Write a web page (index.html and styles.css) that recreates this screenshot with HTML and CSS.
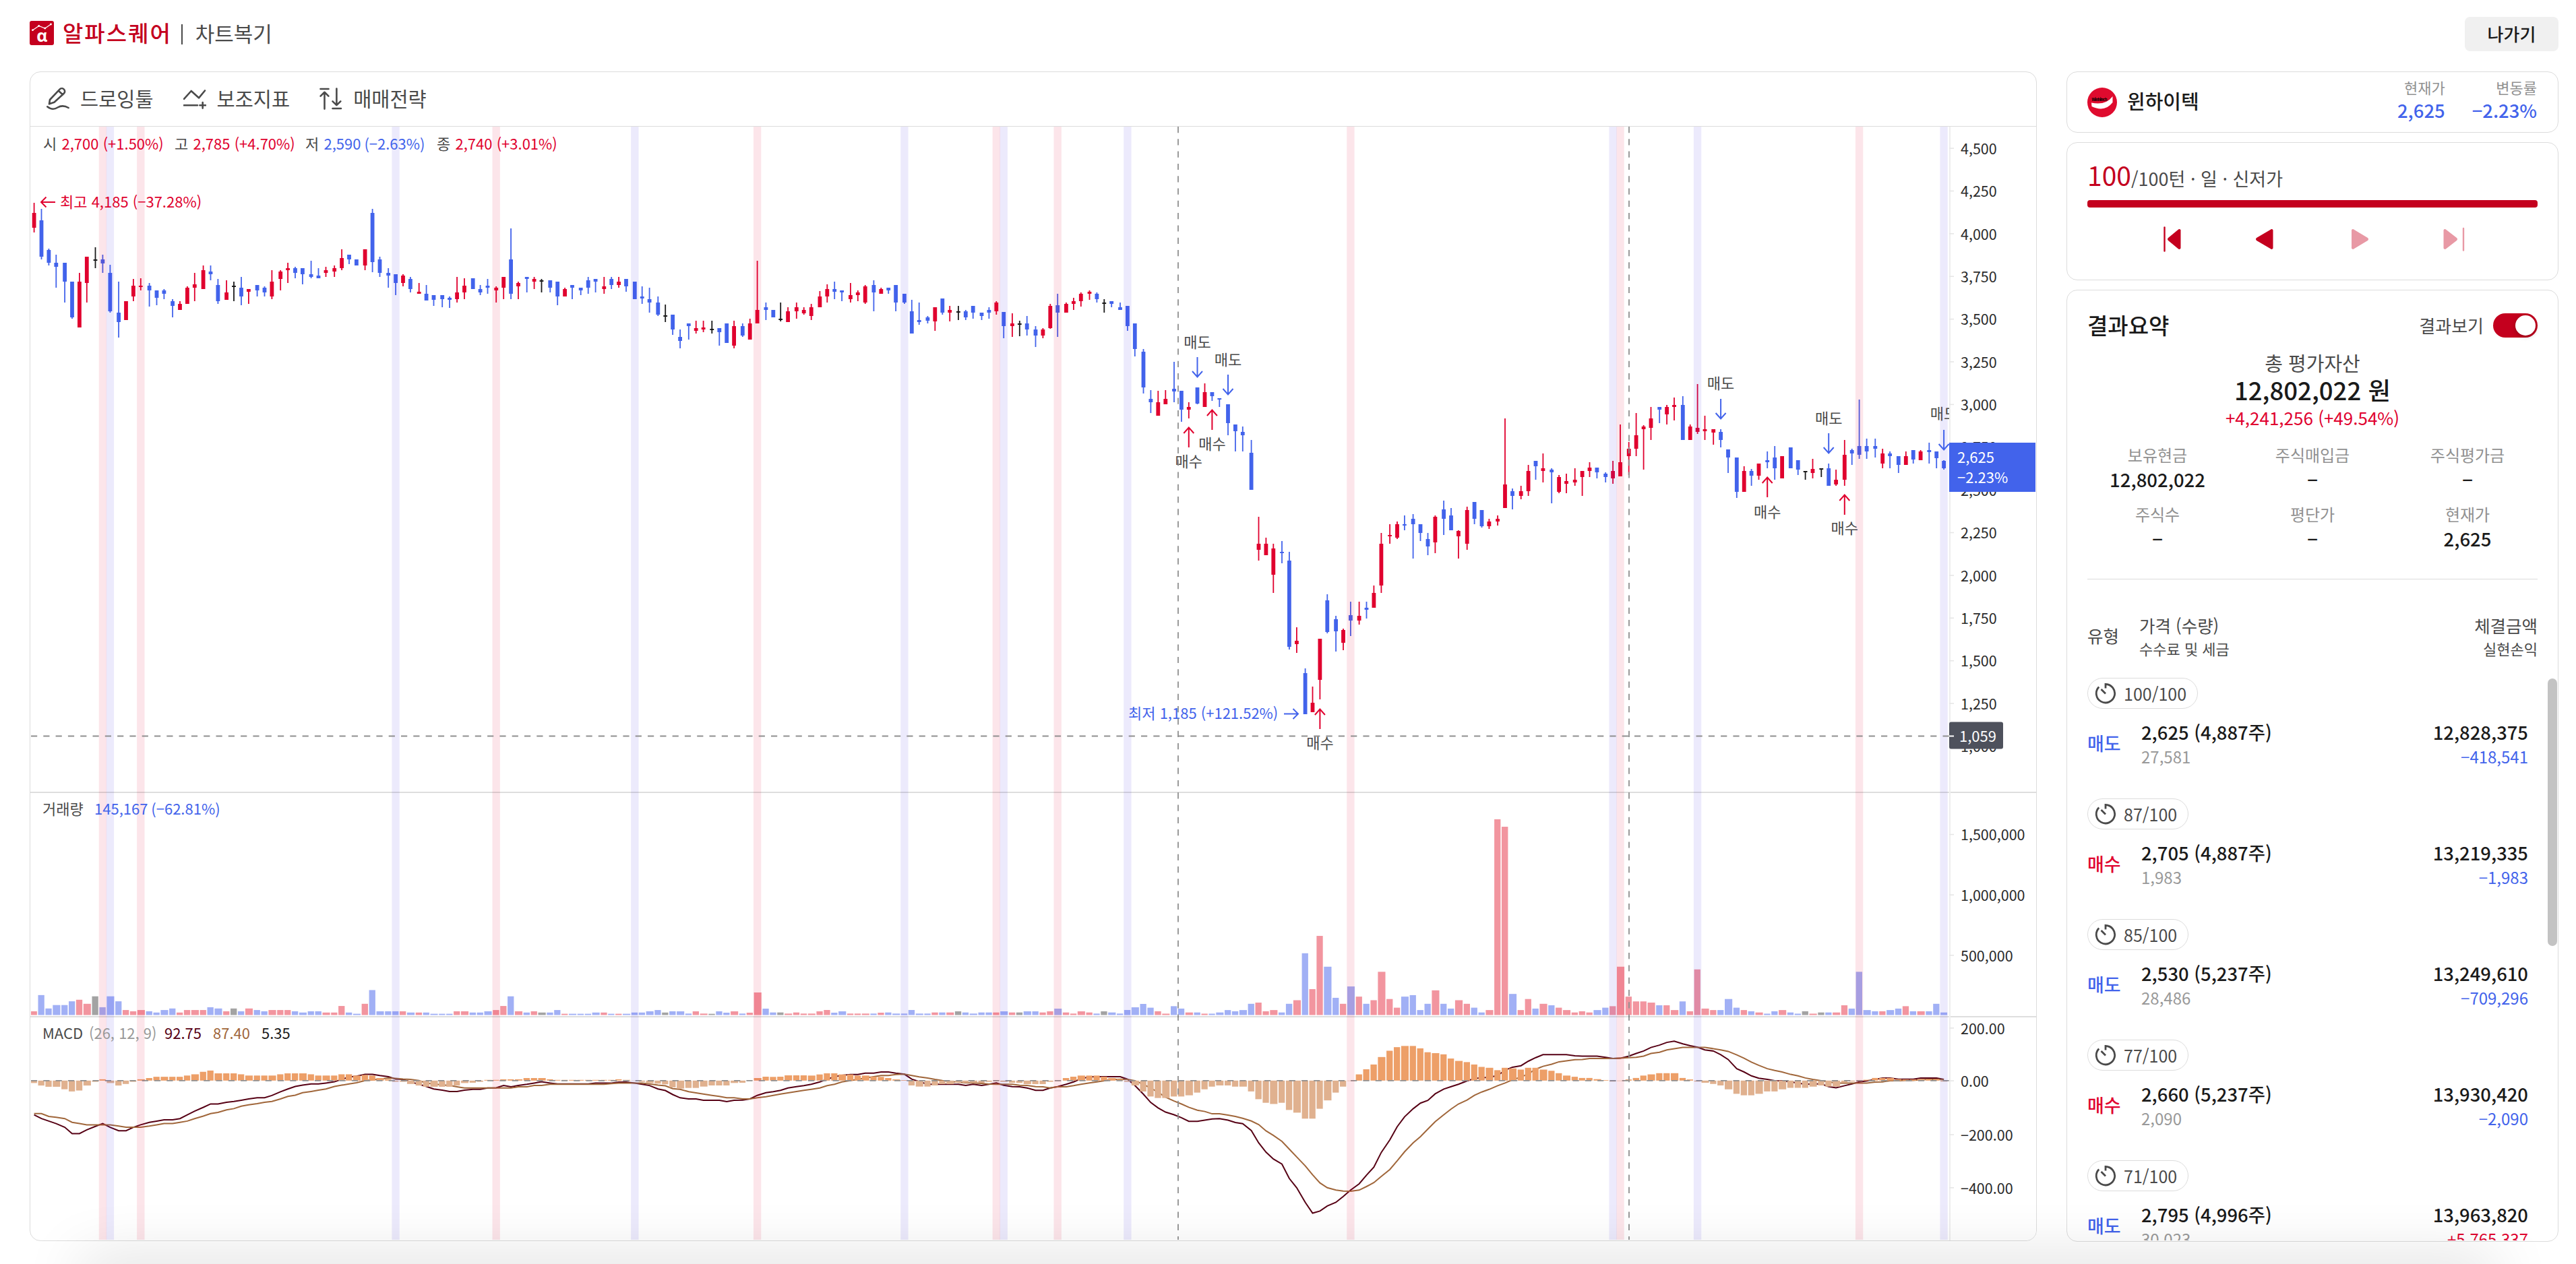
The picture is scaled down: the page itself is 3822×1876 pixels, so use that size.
FILE: index.html
```html
<!DOCTYPE html>
<html lang="ko">
<head>
  <meta charset="UTF-8">
  <meta name="viewport" content="width=device-width, initial-scale=1.0">
  <title>알파스퀘어 | 차트복기</title>
  <link rel="stylesheet" href="styles.css">
</head>
<body>

  <header class="header">
    <div class="brand">
      <svg class="brand-logo" viewBox="0 0 36 36">
        <rect width="36" height="36" rx="3" fill="#c4001e"/>
        <polyline points="4.5,13.7 13.7,7.5 22.8,11 31.5,5" fill="none" stroke="#fff" stroke-width="1.2"/>
        <circle cx="4.5" cy="13.7" r="1.4" fill="#fff"/><circle cx="13.7" cy="7.5" r="1.4" fill="#fff"/>
        <circle cx="22.8" cy="11" r="1.4" fill="#fff"/><circle cx="31.5" cy="5" r="1.4" fill="#fff"/>
        <text class="brand-alpha" x="18.4" y="30.5" text-anchor="middle">α</text>
      </svg>
      <span class="brand-name">알파스퀘어</span>
      <span class="brand-bar"></span>
      <span class="brand-page">차트복기</span>
    </div>
    <button class="exit-btn">나가기</button>
  </header>

  <main class="main">
    <section class="card chart-card">
      <div class="toolbar">
        <div class="tool">
          <svg viewBox="0 0 34 34"><path d="M4 24.3 L5 18 L19.5 2.7 a4.3 4.3 0 0 1 6.5 5.8 L11.5 21.8 Z M17.8 4.8 l6.4 5.6"/><path d="M1.2 28.3 Q9 34.5 16.5 29.5 Q24 25 32.6 30"/></svg>
          <span>드로잉툴</span>
        </div>
        <div class="tool">
          <svg viewBox="0 0 34 34"><path d="M1 16.8 L11.7 5 L23 15.3 L32 4.5 M1 26.3 H21 M24.4 26.3 H33 M28.7 22 V30.6"/></svg>
          <span>보조지표</span>
        </div>
        <div class="tool">
          <svg viewBox="0 0 34 34"><path d="M1.5 2 H13.5 M7.5 31.6 V7 M1.6 12.6 L7.5 6.8 L13.4 12.6 M25.4 1.5 V26 M19.5 20.3 L25.4 26.2 L31.3 20.3 M19.5 31 H32"/></svg>
          <span>매매전략</span>
        </div>
      </div>
      <svg class="chart" id="chart" viewBox="45 188 2976 1653"></svg>
    </section>

    <aside class="side">
      <section class="card stock">
        <svg class="stock-logo" viewBox="0 0 44 44">
          <circle cx="22" cy="22" r="22" fill="#df0b2e"/>
          <path d="M6 22.5 Q27 27 37.5 13 V22 Q26 37 6.5 28 Z" fill="#fff"/>
          <text class="stock-logo-text" x="6.5" y="19.8" textLength="23">Winhitech</text>
        </svg>
        <h1 class="stock-name">윈하이텍</h1>
        <dl class="quote">
          <dt>현재가</dt>
          <dd>2,625</dd>
        </dl>
        <dl class="quote">
          <dt>변동률</dt>
          <dd>−2.23%</dd>
        </dl>
      </section>

      <section class="card turn">
        <p class="turn-count"><strong>100</strong>/100턴 · 일 · 신저가</p>
        <div class="turn-progress"></div>
        <div class="turn-buttons">
          <svg viewBox="0 0 138 40"><path d="M55.5 2.5 V37.5" stroke-width="2.4"/><path d="M79.5 6.5 V33.5 Q78 36 75.5 34 L61 22 Q59 20 61 18 L75.5 6 Q78 4 79.5 6.5 Z" fill="currentColor"/></svg>
          <svg viewBox="0 0 138 40"><path d="M78.5 6.5 V33.5 Q77 36 74.5 34 L54 22 Q52 20 54 18 L74.5 6 Q77 4 78.5 6.5 Z" fill="currentColor"/></svg>
          <svg class="off" viewBox="0 0 138 40"><path d="M57 6.5 V33.5 Q58.5 36 61 34 L81 22 Q83 20 81 18 L61 6 Q58.5 4 57 6.5 Z" fill="currentColor"/></svg>
          <svg class="off" viewBox="0 0 138 40"><path d="M55.5 6.5 V33.5 Q57 36 59.5 34 L75 22 Q77 20 75 18 L59.5 6 Q57 4 55.5 6.5 Z" fill="currentColor"/><path d="M85 4 V36.5" stroke-width="2.4"/></svg>
        </div>
      </section>

      <section class="card result">
        <div class="result-head">
          <h2>결과요약</h2>
          <span class="result-toggle-label">결과보기</span>
          <span class="toggle"></span>
        </div>
        <div class="total">
          <p class="total-label">총 평가자산</p>
          <p class="total-value">12,802,022 원</p>
          <p class="total-diff">+4,241,256 (+49.54%)</p>
        </div>
        <div class="stats">
          <dl><dt>보유현금</dt><dd>12,802,022</dd></dl>
          <dl><dt>주식매입금</dt><dd>−</dd></dl>
          <dl><dt>주식평가금</dt><dd>−</dd></dl>
          <dl><dt>주식수</dt><dd>−</dd></dl>
          <dl><dt>평단가</dt><dd>−</dd></dl>
          <dl><dt>현재가</dt><dd>2,625</dd></dl>
        </div>
        <div class="list-head">
          <span class="list-type">유형</span>
          <div class="list-price">가격 (수량)<small>수수료 및 세금</small></div>
          <div class="list-amount">체결금액<small>실현손익</small></div>
        </div>
        <div class="list" id="list"></div>
        <div class="scroll-thumb"></div>
      </section>
    </aside>
  </main>

  <div class="dock-shadow"></div>

  <script src="chart.js"></script>
</body>
</html>
```

FILE: styles.css
```css
* {
  margin: 0;
  padding: 0;
  box-sizing: border-box;
}

body {
  width: 3822px;
  height: 1876px;
  overflow: hidden;
  background-color: #fff;
  color: #1a1a1a;
  font-family: "Noto Sans CJK KR", "Noto Sans", sans-serif;
}

.header {
  height: 106px;
  padding: 25px 26px 0 44px;
  display: flex;
  justify-content: space-between;
  align-items: flex-start;
}

.brand {
  display: flex;
  align-items: center;
  height: 48px;
  color: #4a4a4a;
}

.brand-logo {
  width: 36px;
  height: 36px;
}

.brand-alpha {
  font-family: "Open Sans", sans-serif;
  font-size: 25px;
  font-weight: bold;
  fill: #fff;
}

.brand-name {
  margin: -2px 0 0 13px;
  font-size: 33px;
  font-weight: 500;
  letter-spacing: 2px;
  color: #c4001e;
}

.brand-bar {
  width: 2px;
  height: 30px;
  margin: 4px 19px 0 14px;
  background-color: #4a4a4a;
}

.brand-page {
  margin-top: -1px;
  font-size: 31px;
}

.exit-btn {
  width: 139px;
  height: 51px;
  padding-bottom: 2px;
  border: none;
  border-radius: 8px;
  background-color: #f0f0f0;
  color: #1a1a1a;
  font-family: inherit;
  font-size: 26px;
  font-weight: 500;
}

.main {
  display: flex;
  justify-content: space-between;
  padding: 0 26px 0 44px;
}

.card {
  border: 1px solid #dcdcdc;
  border-radius: 16px;
  background-color: #fff;
  overflow: hidden;
}

/* chart */

.chart-card {
  width: 2978px;
  height: 1736px;
}

.toolbar {
  height: 81px;
  padding-left: 24px;
  border-bottom: 1px solid #dcdcdc;
  display: flex;
  align-items: center;
  gap: 44px;
}

.tool {
  display: flex;
  align-items: center;
  gap: 16px;
  font-size: 29.5px;
  color: #4a4a4a;
}

.tool span {
  margin-top: -5px;
}

.tool svg {
  width: 34px;
  height: 34px;
  fill: none;
  stroke: #4a4a4a;
  stroke-width: 2.6;
  stroke-linecap: round;
  stroke-linejoin: round;
}

.chart {
  display: block;
  width: 2976px;
  height: 1653px;
  font-size: 22px;
}

.up { fill: #e0002e; }
.down { fill: #4263eb; }
.flat { fill: #1a1a1a; }
.gray { fill: #999; }
.label { fill: #4a4a4a; }
.axis { fill: #2b2b2b; font-size: 21.5px; }
.vol-up { fill: #f2959f; }
.vol-down { fill: #a1b0f5; }
.vol-flat { fill: #a3a3a3; }
.hist-plus { fill: #ed9f68; }
.hist-minus { fill: #e0b18f; }
.macd { fill: none; stroke: #560014; stroke-width: 2; }
.signal { fill: none; stroke: #a0663a; stroke-width: 2; }
.macd-value { fill: #560014; }
.signal-value { fill: #a0663a; }
.arrow-up { fill: none; stroke: #e0002e; stroke-width: 2; }
.arrow-down { fill: none; stroke: #4263eb; stroke-width: 2; }
.dash { stroke: #8f8f8f; stroke-width: 1.8; stroke-dasharray: 9.2 9.1; }
.band-up { fill: rgba(224, 0, 46, 0.1); }
.band-down { fill: rgba(66, 53, 225, 0.1); }
.on-tag { fill: #fff; }

/* right column */

.side {
  width: 730px;
  display: flex;
  flex-direction: column;
}

.stock {
  height: 91px;
  margin-bottom: 14px;
  padding: 0 31px 0 30px;
  display: flex;
  align-items: center;
}

.stock-logo {
  width: 44px;
  height: 44px;
}

.stock-logo-text {
  font-size: 6px;
  font-weight: bold;
}

.stock-name {
  flex: 1;
  margin: -6px 0 0 15px;
  font-size: 29px;
  font-weight: 500;
}

.quote {
  margin: -9px 0 0 40px;
  text-align: right;
}

.quote dt {
  font-size: 22px;
  line-height: 32px;
  color: #919191;
}

.quote dd {
  font-size: 27.4px;
  line-height: 36px;
  font-weight: 500;
  color: #4263eb;
}

.turn {
  height: 205px;
  margin-bottom: 14px;
  padding: 20px 30px 0;
}

.turn-count {
  height: 65px;
  line-height: 54px;
  font-size: 27px;
  color: #4a4a4a;
}

.turn-count strong {
  font-size: 39px;
  font-weight: 400;
  color: #c4001e;
}

.turn-progress {
  height: 11px;
  border-radius: 4px;
  background-color: #c4001e;
}

.turn-buttons {
  display: flex;
  justify-content: center;
  margin: 27px 0 0 2px;
  color: #c4001e;
}

.turn-buttons svg {
  width: 138px;
  height: 40px;
  stroke: currentColor;
  stroke-width: 0;
  stroke-linecap: round;
}

.turn-buttons .off {
  color: #e899a5;
}

.result {
  position: relative;
  height: 1413px;
  padding: 29px 30px 0;
}

.result-head {
  height: 46px;
  display: flex;
  align-items: center;
}

.result-head h2 {
  flex: 1;
  margin-top: -3px;
  font-size: 33px;
  font-weight: 500;
}

.result-toggle-label {
  margin: -2px 14px 0 0;
  font-size: 26px;
  color: #4a4a4a;
}

.toggle {
  width: 66px;
  height: 36px;
  padding: 3px;
  border-radius: 18px;
  background-color: #c4001e;
}

.toggle::after {
  content: "";
  display: block;
  width: 30px;
  height: 30px;
  margin-left: 30px;
  border-radius: 50%;
  background-color: #fff;
  box-shadow: 0 2px 6px rgba(0, 0, 0, 0.25);
}

.total {
  margin-top: 13px;
  text-align: center;
}

.total-label {
  font-size: 29px;
  line-height: 38px;
  color: #4a4a4a;
}

.total-value {
  font-size: 36.5px;
  line-height: 44px;
  font-weight: 500;
}

.total-diff {
  font-size: 26px;
  line-height: 37px;
  color: #e0002e;
}

.stats {
  display: grid;
  grid-template-columns: repeat(3, 230px);
  justify-content: center;
  row-gap: 16px;
  margin-top: 19px;
  padding-bottom: 42px;
  text-align: center;
}

.stats dt {
  font-size: 24px;
  line-height: 36px;
  color: #919191;
}

.stats dd {
  font-size: 27.5px;
  line-height: 36px;
  font-weight: 500;
}

.list-head {
  height: 147px;
  padding-top: 49px;
  border-top: 1px solid #dcdcdc;
  display: flex;
  align-items: flex-start;
  font-size: 25.5px;
  line-height: 38px;
  color: #4a4a4a;
}

.list-type {
  width: 77px;
  margin-top: 15px;
}

.list-head small {
  display: block;
  font-size: 22px;
  line-height: 30px;
}

.list-amount {
  margin-left: auto;
  text-align: right;
}

.list {
  height: 835px;
  padding-right: 14px;
  overflow: hidden;
}

.trade {
  height: 179px;
}

.trade-turn {
  display: flex;
  align-items: center;
  gap: 11px;
  width: max-content;
  height: 46px;
  padding: 0 16px 0 10px;
  border: 1px solid #dcdcdc;
  border-radius: 23px;
  font-size: 25px;
  line-height: 42px;
  color: #4a4a4a;
}

.trade-turn svg {
  width: 32px;
  height: 32px;
  fill: none;
  stroke: #4a4a4a;
  stroke-width: 2.8;
}

.trade-row {
  display: flex;
  align-items: center;
  margin-top: 14px;
}

.trade-type {
  width: 80px;
  font-size: 27px;
  font-weight: 500;
}

.trade-col {
  font-size: 27.4px;
  line-height: 40px;
  font-weight: 500;
}

.trade-col small {
  display: block;
  font-size: 24px;
  line-height: 33px;
  font-weight: 400;
  color: #999;
}

.trade-col:last-child {
  margin-left: auto;
  text-align: right;
}

.trade .buy, .trade .plus { color: #e0002e; }
.trade .sell, .trade .minus { color: #4263eb; }

.scroll-thumb {
  position: absolute;
  top: 576px;
  right: 1px;
  width: 14px;
  height: 397px;
  border-radius: 7px;
  background-color: #c3c3c3;
}

/* soft shade along the bottom edge of the window */
.dock-shadow {
  position: fixed;
  left: 120px;
  right: 120px;
  bottom: -40px;
  height: 40px;
  box-shadow: 0 0 90px rgba(0, 0, 0, 0.2);
  pointer-events: none;
}
```

FILE: chart.js
```js
const chart = document.getElementById("chart");
const LAST = 248;
const AXIS_X = 2892;
const VOL_BASE = 1506.5;
const MACD_ZERO = 1603.8;

// bars snap to whole units of the 1.8187px grid
function cx(i) {
  return +(50.6 + 1.8187 * Math.floor(i * 6.2855)).toFixed(1);
}

// every block: first y of the pane, units per pixel, then high,low,top,bottom,colour
const candleBlocks = [
  [0, 2.8, `843,965,884,945,r 868,1077,915,1067,b 1032,1104,1038,1093,b 1058,1196,1093,1109,b 1093,1257,1093,1170,b 1170,1323,1170,1318,b
    1134,1361,1170,1361,r 1067,1257,1067,1175,r 1028,1113,1079,1084,k 1058,1134,1078,1094,b 1099,1298,1134,1294,b 1170,1402,1298,1338,b
    1252,1329,1252,1329,r 1159,1252,1186,1231,r 1155,1206,1186,1190,r 1176,1273,1186,1206,b 1206,1267,1206,1237,b 1201,1242,1206,1221,b
    1242,1318,1252,1272,b 1252,1287,1262,1287,r 1190,1262,1196,1262,r 1134,1252,1181,1196,r 1103,1200,1124,1200,r 1103,1165,1129,1140,b
    1159,1262,1185,1252,b 1165,1247,1216,1247,r 1170,1252,1186,1190,k 1150,1267,1196,1231,b 1201,1262,1201,1211,r 1185,1231,1185,1206,b
    1190,1231,1196,1216,b 1124,1242,1170,1231,r 1124,1206,1129,1159,r 1093,1175,1113,1124,r 1109,1155,1113,1134,b 1113,1181,1113,1140,b
    1084,1155,1140,1150,b 1113,1155,1145,1155,b 1109,1150,1124,1134,r 1104,1150,1113,1129,r 1037,1124,1073,1113,r 1058,1098,1058,1078,b
    1078,1104,1078,1104,b 1037,1124,1037,1104,r 868,1130,884,1088,b 1067,1150,1078,1134,b 1113,1196,1134,1144,b 1140,1226,1140,1175,b
    1140,1190,1144,1175,r 1150,1216,1159,1201,b 1176,1222,1211,1222,r 1185,1248,1221,1248,b 1226,1272,1226,1247,b 1226,1277,1226,1242,b
    1232,1279,1238,1247,b 1150,1257,1216,1242,r 1155,1242,1186,1216,r 1155,1200,1155,1200,b 1185,1226,1200,1216,b 1160,1221,1186,1196,b
    1190,1257,1196,1206,r 1150,1242,1150,1196,r 950,1242,1078,1221,b 1170,1242,1175,1190,r 1150,1216,1150,1159,b 1150,1201,1160,1170,r
    1160,1216,1165,1169,k`],
  [280, 3, `408,463,408,441,b 414,518,414,480,b 441,480,447,480,r 430,491,430,441,b 441,474,441,452,b 392,469,408,441,b
    402,463,402,414,b 392,469,435,447,r 392,447,402,430,b 392,441,414,430,r 402,458,402,435,b 414,491,414,491,b
    436,513,480,490,b 441,551,491,507,b 480,567,507,561,b 517,595,563,567,k 561,650,561,627,b 628,710,660,677,b
    600,672,600,611,b 589,644,622,633,r 589,639,617,627,r 589,644,624,628,k 622,698,622,639,b 600,688,600,688,b
    589,710,611,699,r 600,660,611,654,b 578,671,600,671,r 321,600,540,600,r 507,584,528,540,b 540,572,540,572,b
    507,590,579,583,k 529,595,545,595,r 507,578,528,545,r 529,562,540,556,r 514,584,529,567,r 457,529,480,529,r
    425,507,447,480,r 414,491,447,458,b 452,502,452,463,b 420,507,474,491,r 452,502,463,474,r 430,513,436,507,r
    408,545,430,463,b 441,469,447,469,r 441,469,441,452,b 430,545,430,507,b 468,513,468,507,b 496,644,546,644,b
    507,605,584,594,b 567,600,573,589,b 528,633,528,590,r 490,562,490,551,b 523,590,540,551,r 523,584,546,550,k
    540,584,546,573,b 523,578,523,551,b 551,584,551,567,b 529,578,540,551,b 502,562,507,546,r 550,666,550,611,b
    556,661,600,611,r 589,656,601,605,k 567,655,600,627,b 611,705,627,655,b 622,666,627,655,r 513,623,523,622,r
    469,660,518,551,b 507,551,513,551,r 485,540,502,513,r 463,524,469,502,r 452,496,458,469,r 463,507,469,491,b
    491,551,508,512,k 502,529,502,513,b 507,540,529,540,b 523,633,523,611,b 600,748,600,715,b`],
  [420, 2.178, `214,357,222,338,b 346,420,374,385,b 349,429,385,429,r 346,393,374,393,r 254,385,342,350,b 349,449,349,409,b
    385,437,401,409,r 338,393,338,389,b 325,401,353,401,r 353,381,353,366,b 373,401,373,377,b 393,492,393,452,b
    457,544,457,480,b 465,544,481,492,b 508,668,548,668,b 756,898,843,862,r 823,879,843,879,r 843,1002,858,942,r
    835,906,870,874,b 870,1185,898,1176,b 1113,1196,1157,1168,r 1245,1395,1260,1395,b 1304,1387,1356,1387,r 1149,1347,1149,1283,r
    1006,1133,1026,1129,b 1077,1192,1086,1125,b 1117,1188,1121,1164,r 1030,1141,1073,1092,b 1030,1105,1077,1092,r 1030,1085,1050,1057,b
    978,1049,1002,1049,r 807,1002,843,978,r 779,843,815,819,r 771,827,779,823,r 752,799,779,783,b 747,890,763,779,b
    779,835,779,807,b 807,879,827,851,b 752,874,756,838,r 703,814,732,763,b 727,799,752,799,b 799,890,802,819,r
    723,862,735,843,r 708,779,708,763,b 735,791,735,787,b 763,795,771,787,r 751,783,763,771,r 437,727,652,727,r
    664,731,672,688,b 656,699,672,688,r 588,688,608,672,r 576,636,576,592,b 552,644,600,608,r 600,712,604,612,b
    620,679,628,675,r 616,679,640,648,r 600,656,636,644,r 608,688,608,628,r 580,628,597,608,r 597,632,597,612,b
    612,644,616,627,b 576,648,608,632,r 457,624,580,624,r 513,621,536,560,r 421,560,492,536,r`],
  [160, 1.5525, `731,834,735,741,r 689,766,715,737,r 689,727,689,696,b 684,730,689,706,r 667,720,684,689,r 664,766,684,766,b
    729,766,735,766,r 636,752,738,747,r 709,766,741,745,r 741,777,741,749,r 741,783,747,766,b 787,842,787,806,b
    806,899,806,885,b 826,885,837,885,r 832,871,837,848,b 820,857,820,848,r 792,831,812,817,b 780,857,806,831,b
    803,854,803,854,r 783,831,783,831,b 812,846,812,834,b 837,857,837,840,k 809,854,832,842,r 831,851,831,834,k
    820,871,831,871,b 834,871,857,868,r 766,871,800,857,r 786,823,789,797,b 672,809,780,800,b 763,809,780,792,b
    763,806,780,786,b 786,831,797,820,r 792,831,797,802,b 803,842,803,823,b 792,823,803,823,r 789,820,789,811,b
    789,812,792,812,r 772,820,789,794,b 792,831,792,808,b 812,834,814,831,b`]
];

const volumeBlocks = [
  [1150, 2.16, "758 706 749 738 738 726 721 734 710 745 710 726 754 758 754 758 762 754 749 762 754 754 754 745 749 758 749 758 749 754 758 754 754 754 758 762 758 758 762 762 741 762 766 734 690 758 758 758 758 762 762 762 766 766 766 758 758 762 762 758 754 741 710 758 762 758 762 762 754 766 766 766 766 762 762 766 766 766 762 762 758 754 762 758"],
  [1440, 3, "183 193 183 193 194 183 189 183 193 189 99 171 188 188 193 188 193 193 183 177 189 183 193 193 193 193 189 188 193 193 177 193 193 188 188 188 183 188 193 188 188 188 183 188 188 183 183 188 183 171 188 193 183 188 193 183 188 193 177 165 150"],
  [1180, 2.253, "711 723 731 706 714 727 727 731 731 727 719 723 719 698 694 723 719 727 698 686 529 649 471 574 678 698 640 674 698 686 591 682 711 674 669 719 698 653 698 714 686 698 711 727 719 81 106 665 719 682 714 698 703 711 719 727 723 727 719 711 706 574 674 690 690 694 703 703 719 690 723 583 714 719 719 682 711 719 723 727 731 723 719 727 731 723 731 727 727 727 703 714 591 719 723 723 719 714 706 723 723 723 698 727"]
];

const histBlocks = [
  [1150, 2.16, "988 996 1000 1000 1008 1015 1012 996 984 976 988 996 991 984 976 972 968 968 968 968 964 960 952 948 957 957 957 960 964 964 964 964 960 957 957 957 960 964 964 964 960 960 964 962 964 972 976 984 984 991 996 1000 1000 1000 1000 996 988 987 984 978 978 976 976 976 972 972 972 976 978 978 978 978 978 978 978 978 976 978 981 984 988 990 992 1002"],
  [1440, 3, "527 524 524 518 513 513 513 502 501 490 480 474 475 474 468 468 468 469 464 459 459 464 464 469 469 474 475 480 486 489 513 518 518 513 507 507 501 501 501 501 497 493 497 501 502 507 507 507 497 493 480 474 469 469 469 474 480 485 497 513 540"],
  [1180, 2.253, "1008 1013 1013 1008 1008 1004 995 984 975 971 971 975 975 991 1017 1029 1033 1029 1053 1062 1082 1082 1049 1021 995 975 956 934 917 901 876 855 843 839 839 847 860 863 867 881 889 893 901 909 912 920 912 914 918 912 912 918 922 930 938 942 946 946 950 953 958 956 951 946 938 934 930 930 930 946 951 958 962 966 971 984 999 1004 1004 999 991 991 984 979 979 979 975 971 975 975 962 958 957 952 946 946 946 950 951 951 950 950 950 958"]
];

const macdBlocks = [
  [1150, 2.16, "1090 1102 1110 1118 1130 1150 1150 1138 1127 1118 1130 1141 1141 1130 1122 1114 1110 1106 1106 1102 1090 1078 1066 1055 1055 1050 1047 1043 1039 1035 1035 1028 1016 1007 999 995 991 991 988 984 976 969 966 960 960 964 968 975 976 984 992 999 1007 1011 1015 1015 1011 1008 1008 1004 1003 996 1000 996 992 988 984 988 991 991 991 991 991 988 988 988 985 985 988 992 996 1007 1012 1025"],
  [1440, 3, "568 573 573 579 579 579 585 579 578 573 557 545 541 535 524 518 514 508 497 485 474 468 464 464 458 458 453 453 458 463 485 496 508 508 508 508 508 513 508 513 508 502 512 518 519 524 535 535 524 518 508 497 483 475 474 474 474 474 485 513 552"],
  [1180, 2.253, "1028 1046 1060 1069 1079 1091 1091 1087 1083 1082 1087 1095 1099 1122 1163 1194 1217 1234 1282 1313 1362 1398 1391 1374 1362 1342 1321 1300 1271 1244 1195 1153 1109 1076 1049 1030 1021 999 983 975 967 956 948 945 944 938 920 910 905 890 878 868 868 868 868 872 873 873 873 877 881 880 873 864 856 844 836 827 823 832 838 843 852 856 868 884 915 926 939 947 951 955 956 959 963 967 966 966 975 979 972 966 959 956 951 946 946 950 950 950 946 946 946 951"]
];

const signalBlocks = [
  [1150, 2.16, "1086 1086 1095 1098 1102 1114 1118 1122 1122 1122 1122 1126 1130 1130 1130 1126 1122 1118 1118 1114 1110 1102 1094 1086 1082 1074 1070 1062 1058 1054 1050 1047 1039 1031 1027 1019 1015 1011 1007 999 995 991 987 980 978 975 972 973 975 976 980 988 991 994 996 1000 1004 1004 1004 1004 1004 1004 1004 1000 1000 996 996 992 992 992 992 992 992 992 992 990 988 988 988 988 991 995 997 1006"],
  [1440, 3, "530 541 546 551 557 562 568 568 573 573 568 563 557 551 546 540 535 530 524 514 508 497 491 486 480 474 469 469 464 463 469 475 480 486 491 495 499 501 502 504 507 508 508 508 512 513 518 519 524 519 519 514 508 502 497 492 487 485 486 492 508"],
  [1180, 2.253, "980 994 1010 1023 1033 1044 1054 1058 1066 1066 1070 1075 1081 1090 1102 1123 1138 1158 1184 1210 1240 1270 1297 1313 1321 1324 1325 1321 1309 1296 1275 1252 1223 1193 1163 1142 1117 1092 1069 1050 1033 1020 1004 993 984 972 963 952 943 932 917 907 900 892 889 885 884 881 881 881 881 880 878 877 873 864 860 852 848 844 844 844 844 848 852 857 869 880 893 904 915 921 926 934 939 946 951 955 959 963 963 963 963 963 960 959 955 955 954 954 952 951 951 952"]
];

function unpack(blocks) {
  const out = [];
  blocks.forEach(([top, unit, text]) => {
    text.trim().split(/\s+/).forEach(v => out.push(top + v / unit));
  });
  return out;
}

const candles = [];
candleBlocks.forEach(([top, unit, text]) => {
  text.trim().split(/\s+/).forEach(row => {
    const p = row.split(",");
    const y = p.slice(0, 4).map(v => Math.round(top + v / unit));
    candles.push({ high: y[0], low: y[1], top: y[2], bottom: y[3], dir: { r: "up", b: "down", k: "flat" }[p[4]] });
  });
});

let html = "";

function rect(x, y, w, h, cls) {
  html += `<rect x="${x}" y="${y}" width="${w}" height="${h}" class="${cls}"/>`;
}

function text(x, y, value, cls, anchor) {
  html += `<text x="${x}" y="${y}" class="${cls}" text-anchor="${anchor || "start"}">${value}</text>`;
}

function line(points, cls) {
  html += `<polyline points="${points}" class="${cls}"/>`;
}

function dashed(x1, y1, x2, y2) {
  html += `<line x1="${x1}" y1="${y1}" x2="${x2}" y2="${y2}" class="dash"/>`;
}

// bars leave a thin gap before the next one
function barSpan(i) {
  const left = i ? cx(i) - 5 : 46;
  const right = i < LAST ? cx(i + 1) - 6.6 : cx(i) + 5;
  return [left, right - left];
}

// volume
unpack(volumeBlocks).forEach((y, i) => {
  const [x, w] = barSpan(i);
  rect(x, y, w, VOL_BASE - y, "vol-" + candles[i].dir);
});

// MACD
line(unpack(macdBlocks).map((y, i) => cx(i) + "," + y.toFixed(1)).join(" "), "macd");
line(unpack(signalBlocks).map((y, i) => cx(i) + "," + y.toFixed(1)).join(" "), "signal");
unpack(histBlocks).forEach((y, i) => {
  const [x, w] = barSpan(i);
  if (y < MACD_ZERO) rect(x, y, w, MACD_ZERO - y, "hist-plus");
  else rect(x, MACD_ZERO, w, y - MACD_ZERO, "hist-minus");
});
dashed(46, MACD_ZERO, AXIS_X, MACD_ZERO);

// candles
candles.forEach((c, i) => {
  rect(cx(i) - 0.9, c.high, 1.8, c.low - c.high, c.dir);
  rect(cx(i) - 2.9, c.top, 5.8, Math.max(2, c.bottom - c.top), c.dir);
});

// disclosure bands
[9, 14, 60, 94, 125, 133, 171, 206, 237].forEach(i => rect(cx(i) - 5.7, 188, 11.4, 1652, "band-up"));
[10, 47, 78, 113, 126, 142, 205, 216, 248].forEach(i => rect(cx(i) - 5.7, 188, 11.4, 1652, "band-down"));

// trade markers: index, top of the arrow, middle of the label
[[151, 530, 508], [155, 556, 534], [219, 592, 569], [233, 643, 621], [248, 638, 614]].forEach(([i, y, ly]) => {
  const x = cx(i);
  html += `<path class="arrow-down" d="M${x} ${y} V${y + 29} M${x - 7.5} ${y + 21} L${x} ${y + 29.5} L${x + 7.5} ${y + 21}"/>`;
  text(x, ly + 8, "매도", "label", "middle");
});
[[150, 634, 685], [153, 608, 659], [167, 1052, 1103], [225, 708, 760], [235, 734, 784]].forEach(([i, y, ly]) => {
  const x = cx(i);
  html += `<path class="arrow-up" d="M${x} ${y + 30} V${y + 1} M${x - 7.5} ${y + 9} L${x} ${y + 0.5} L${x + 7.5} ${y + 9}"/>`;
  text(x, ly + 8, "매수", "label", "middle");
});

// highest and lowest price
html += `<path class="arrow-up" d="M82 300 H61 M68.5 292.5 L61 300 L68.5 307.5"/>`;
text(89, 308, "최고 4,185 (−37.28%)", "up");
html += `<path class="arrow-down" d="M1905 1059.5 H1926 M1918.5 1052 L1926 1059.5 L1918.5 1067"/>`;
text(1674, 1067, "최저 1,185 (+121.52%)", "down");

dashed(1748, 188, 1748, 1840);
dashed(2417, 188, 2417, 1840);
dashed(46, 1092.5, AXIS_X, 1092.5);

// pane borders and axis
html += `<rect x="${AXIS_X}" y="188" width="130" height="1653" fill="#fff"/>`;
html += `<rect x="45" y="1175" width="2976" height="2" fill="rgba(0,0,0,.13)"/>`;
html += `<rect x="45" y="1508" width="2976" height="2" fill="rgba(0,0,0,.13)"/>`;
html += `<rect x="${AXIS_X}" y="188" width="2" height="1653" fill="#eee"/>`;

function tick(y, value) {
  html += `<rect x="${AXIS_X}" y="${y - 1}" width="7" height="1.6" fill="#e6e6e6"/>`;
  text(2909, y + 8.5, value, "axis");
}

for (let p = 4500, y = 220.3; p >= 1000; p -= 250, y += 63.38) {
  tick(y, p.toLocaleString("en-US"));
}
tick(1238.7, "1,500,000");
tick(1328.4, "1,000,000");
tick(1418, "500,000");
tick(1526, "200.00");
tick(1604.3, "0.00");
tick(1684.3, "−200.00");
tick(1763, "−400.00");

html += `<rect x="${AXIS_X}" y="657" width="128" height="73" fill="#4263eb"/>`;
text(2904, 686.5, "2,625", "on-tag");
text(2904, 717, "−2.23%", "on-tag");
html += `<rect x="${AXIS_X}" y="1071.5" width="80" height="40" rx="3" fill="#4e515c"/>`;
html += `<rect x="${AXIS_X}" y="1091.5" width="7" height="2" fill="#fff"/>`;
text(2907, 1101, "1,059", "on-tag");

// legends
const ohlc = [["시", "2,700 (+1.50%)", "up", 64], ["고", "2,785 (+4.70%)", "up", 259], ["저", "2,590 (−2.63%)", "down", 453], ["종", "2,740 (+3.01%)", "up", 648]];
ohlc.forEach(([name, value, cls, x]) => {
  text(x, 222, name, "label");
  text(x + 27.5, 222, value, cls);
});
text(63, 1209, "거래량", "label");
text(140, 1209, "145,167 (−62.81%)", "down");
text(63, 1542, "MACD", "label");
text(132, 1542, "(26, 12, 9)", "gray");
text(244, 1542, "92.75", "macd-value");
text(316, 1542, "87.40", "signal-value");
text(388, 1542, "5.35", "flat");

chart.innerHTML = html;

// trades
const trades = [
  [100, "매도", "2,625 (4,887주)", "27,581", "12,828,375", "−418,541"],
  [87, "매수", "2,705 (4,887주)", "1,983", "13,219,335", "−1,983"],
  [85, "매도", "2,530 (5,237주)", "28,486", "13,249,610", "−709,296"],
  [77, "매수", "2,660 (5,237주)", "2,090", "13,930,420", "−2,090"],
  [71, "매도", "2,795 (4,996주)", "30,023", "13,963,820", "+5,765,337"]
];

document.getElementById("list").innerHTML = trades.map(([turn, type, price, fee, amount, profit]) => `
  <div class="trade">
    <div class="trade-turn">
      <svg viewBox="0 0 32 32"><path d="M16 8.5 V2.5 A13.7 13.7 0 1 1 6.2 6.6 M9.5 10 L16 16.5"/></svg>${turn}/100
    </div>
    <div class="trade-row">
      <span class="trade-type ${type === "매도" ? "sell" : "buy"}">${type}</span>
      <div class="trade-col">${price}<small>${fee}</small></div>
      <div class="trade-col">${amount}<small class="${profit[0] === "+" ? "plus" : "minus"}">${profit}</small></div>
    </div>
  </div>`).join("");
```
